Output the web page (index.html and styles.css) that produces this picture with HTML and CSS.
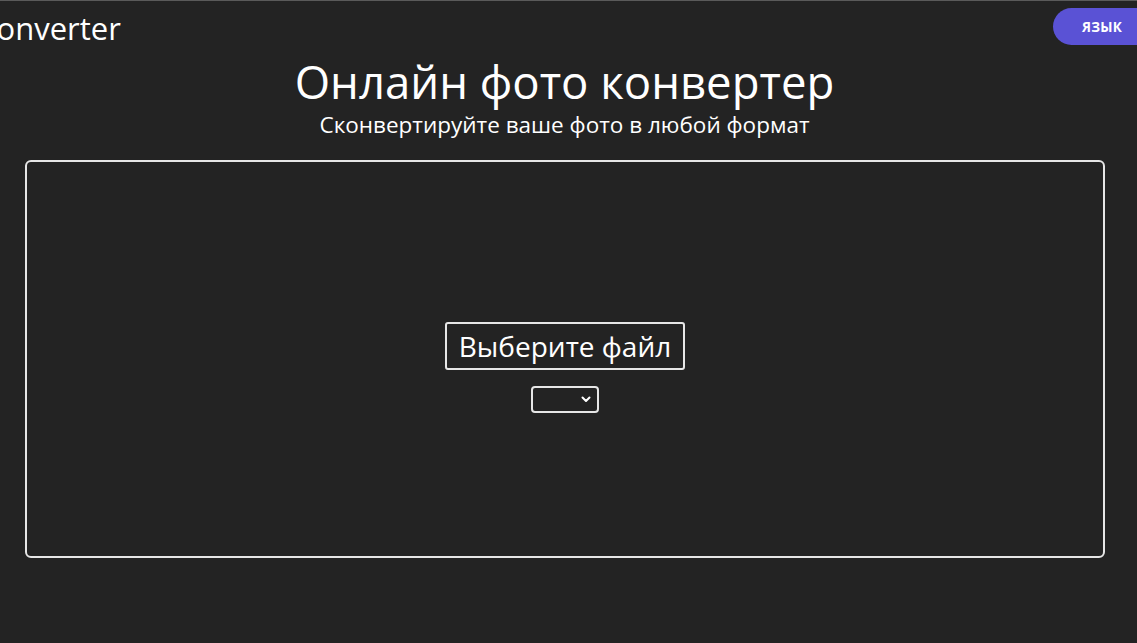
FILE: index.html
```html
<!DOCTYPE html>
<html lang="ru">
<head>
<meta charset="utf-8">
<title>Онлайн фото конвертер</title>
<link rel="stylesheet" href="styles.css">
</head>
<body>
<header class="header">
  <div class="logo">Converter</div>
  <button class="lang">ЯЗЫК</button>
</header>
<main class="main">
  <h1 class="title">Онлайн фото конвертер</h1>
  <p class="subtitle">Сконвертируйте ваше фото в любой формат</p>
  <section class="dropzone">
    <button class="choose">Выберите файл</button>
    <div class="select">
      <svg class="chev" width="10" height="7" viewBox="0 0 10 7"><path d="M1.5 1.5 L5 5 L8.5 1.5" fill="none" stroke="#fff" stroke-width="2" stroke-linecap="round" stroke-linejoin="round"/></svg>
    </div>
  </section>
</main>
</body>
</html>
```

FILE: styles.css
```css
html, body {
  margin: 0;
  padding: 0;
}
body {
  background: #232323;
  border-top: 1px solid #5a5a5a;
  color: #fff;
  font-family: "Open Sans", "Noto Sans", sans-serif;
  overflow: hidden;
  height: 642px;
}
.header {
  display: flex;
  justify-content: space-between;
  align-items: flex-start;
  height: 44px;
}
.logo {
  font-size: 31px;
  line-height: 1;
  margin-top: 12px;
  margin-left: -23px;
}
.lang {
  margin-top: 7px;
  height: 37px;
  width: 84px;
  padding: 0 0 0 29px;
  border: none;
  background: #5a52d5;
  color: #fff;
  border-radius: 19px 0 0 19px;
  font-family: "Open Sans", sans-serif;
  font-weight: 700;
  font-size: 13.5px;
  letter-spacing: 0.3px;
  text-align: left;
}
.main {
  display: flex;
  flex-direction: column;
  align-items: center;
  padding-right: 8px;
}
.title {
  margin: 11px 0 0;
  font-weight: 400;
  font-size: 45.5px;
  line-height: 50px;
}
.subtitle {
  margin: 5px 0 0;
  font-size: 22.5px;
  line-height: 27px;
}
.dropzone {
  margin: 22px 24px 0 25px;
  align-self: stretch;
  height: 398px;
  box-sizing: border-box;
  border: 2px solid #e6e6e6;
  border-radius: 6px;
  display: flex;
  flex-direction: column;
  align-items: center;
  justify-content: center;
  gap: 16px;
  padding-top: 16px;
}
.choose {
  width: 240px;
  height: 48px;
  box-sizing: border-box;
  border: 2px solid #e6e6e6;
  border-radius: 3px;
  background: transparent;
  color: #fff;
  font-family: "Open Sans", sans-serif;
  font-size: 28px;
  padding: 0;
}
.select {
  width: 68px;
  height: 27px;
  box-sizing: border-box;
  border: 2px solid #e6e6e6;
  border-radius: 4px;
  display: flex;
  justify-content: flex-end;
  align-items: center;
  padding-right: 6px;
}
```
